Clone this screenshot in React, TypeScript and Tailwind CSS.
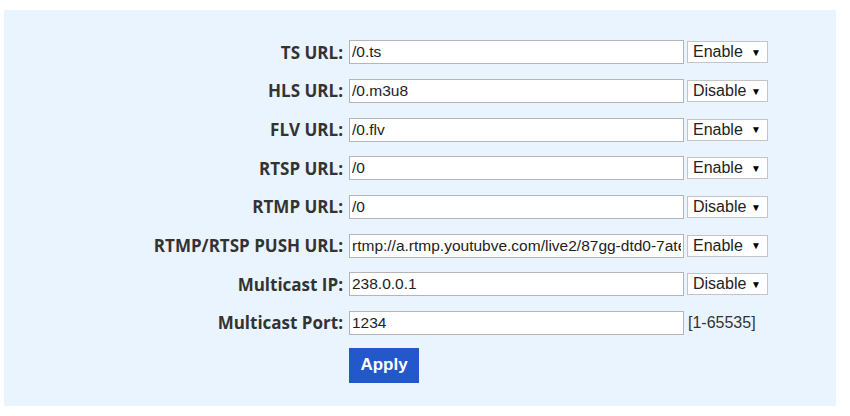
const rows = [
  { label: 'TS URL:', value: '/0.ts', mode: 'Enable' },
  { label: 'HLS URL:', value: '/0.m3u8', mode: 'Disable' },
  { label: 'FLV URL:', value: '/0.flv', mode: 'Enable' },
  { label: 'RTSP URL:', value: '/0', mode: 'Enable' },
  { label: 'RTMP URL:', value: '/0', mode: 'Disable' },
  { label: 'RTMP/RTSP PUSH URL:', value: 'rtmp://a.rtmp.youtubve.com/live2/87gg-dtd0-7ate-x2k9', mode: 'Enable' },
  { label: 'Multicast IP:', value: '238.0.0.1', mode: 'Disable' },
  { label: 'Multicast Port:', value: '1234', mode: '' },
];

const ModeSelect = ({ mode }: { mode: string }) => {
  return (
    <div className="flex h-[22px] w-[81px] items-center justify-between border border-[#c4c4c4] bg-white pl-[5px] pr-[6px] text-[16px] text-[#222]">
      <span>{mode}</span>
      <span className="text-[10px] text-black">▼</span>
    </div>
  );
};

const App = () => {
  return (
    <div className="h-[416px] w-[850px] bg-white pt-[10px] pl-[4px] font-['Liberation_Sans',Arial,sans-serif]">
      <div className="h-[396px] w-[832px] bg-[#eaf4fe] pt-[23px]">
        {rows.map((row, i) => (
          <div key={i} className="flex h-[38.7px] items-center">
            <div className="w-[345px] whitespace-nowrap pr-[6px] text-right font-['Open_Sans',sans-serif] text-[17px] font-bold text-[#333]">
              {row.label}
            </div>
            <input
              readOnly
              value={row.value}
              className="h-[24px] w-[335px] border border-[#b5b5b5] bg-white px-[2px] text-[15.5px] text-[#222] outline-none"
            />
            <div className="ml-[3px]">
              {row.mode ? (
                <ModeSelect mode={row.mode} />
              ) : (
                <span className="ml-[1px] text-[16px] text-[#333]">[1-65535]</span>
              )}
            </div>
          </div>
        ))}
        <div className="mt-[5px] pl-[345px]">
          <button className="h-[35px] w-[70px] bg-[#2258c9] text-[17px] font-bold text-white">
            Apply
          </button>
        </div>
      </div>
    </div>
  );
};

export default App;
